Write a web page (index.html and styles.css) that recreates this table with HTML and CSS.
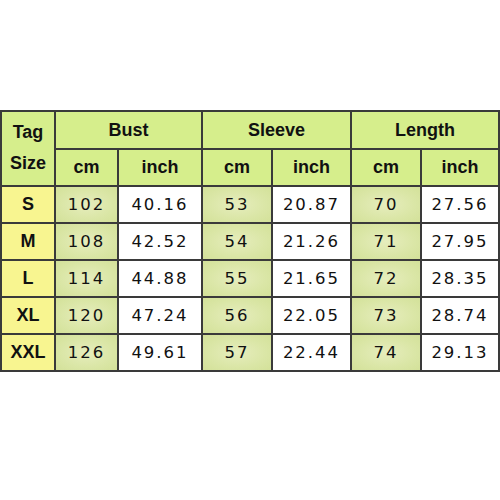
FILE: index.html
```html
<!DOCTYPE html>
<html>
<head>
<meta charset="utf-8">
<link rel="stylesheet" href="styles.css">
</head>
<body>
<div class="page">
<table class="chart">
<colgroup>
<col class="c-tag"><col class="c1"><col class="c2"><col class="c3"><col class="c4"><col class="c5"><col class="c6">
</colgroup>
<tr class="hrow top">
<th class="tag" rowspan="2">Tag<br>Size</th>
<th colspan="2">Bust</th>
<th colspan="2">Sleeve</th>
<th colspan="2">Length</th>
</tr>
<tr class="hrow">
<th>cm</th><th>inch</th><th>cm</th><th>inch</th><th>cm</th><th>inch</th>
</tr>
<tr><td class="size">S</td><td class="cm">102</td><td>40.16</td><td class="cm">53</td><td>20.87</td><td class="cm">70</td><td>27.56</td></tr>
<tr><td class="size">M</td><td class="cm">108</td><td>42.52</td><td class="cm">54</td><td>21.26</td><td class="cm">71</td><td>27.95</td></tr>
<tr><td class="size">L</td><td class="cm">114</td><td>44.88</td><td class="cm">55</td><td>21.65</td><td class="cm">72</td><td>28.35</td></tr>
<tr><td class="size">XL</td><td class="cm">120</td><td>47.24</td><td class="cm">56</td><td>22.05</td><td class="cm">73</td><td>28.74</td></tr>
<tr><td class="size">XXL</td><td class="cm">126</td><td>49.61</td><td class="cm">57</td><td>22.44</td><td class="cm">74</td><td>29.13</td></tr>
</table>
</div>
</body>
</html>
```
FILE: styles.css
```css
html, body {
  margin: 0;
  padding: 0;
  background: #ffffff;
}
.page {
  padding-top: 110px;
  padding-left: 0;
}
.chart {
  border-collapse: collapse;
  table-layout: fixed;
  width: 498px;
}
.c-tag { width: 54px; }
.c1 { width: 63px; }
.c2 { width: 84px; }
.c3 { width: 70px; }
.c4 { width: 79px; }
.c5 { width: 70px; }
.c6 { width: 78px; }
.chart th, .chart td {
  border: 2px solid #3a3a3a;
  padding: 0;
  text-align: center;
  vertical-align: middle;
}
.chart th {
  background: #d6ee8c;
  font-family: "Liberation Sans", Arial, sans-serif;
  font-weight: bold;
  font-size: 18px;
  color: #111;
  height: 35px;
}
.chart .top th {
  height: 36px;
}
.chart th.tag {
  line-height: 31px;
  padding-bottom: 2px;
}
.chart td {
  height: 35px;
  font-family: "DejaVu Sans", sans-serif;
  font-size: 16.5px;
  letter-spacing: 2px;
  color: #111;
  background: #ffffff;
}
.chart td.size {
  background: #f8f590;
  font-family: "Liberation Sans", Arial, sans-serif;
  font-weight: bold;
  font-size: 18px;
  letter-spacing: 0;
}
.chart td.cm {
  background: radial-gradient(ellipse at center, #e6edbd 0%, #dae6a6 60%, #d3e199 100%);
}
```
